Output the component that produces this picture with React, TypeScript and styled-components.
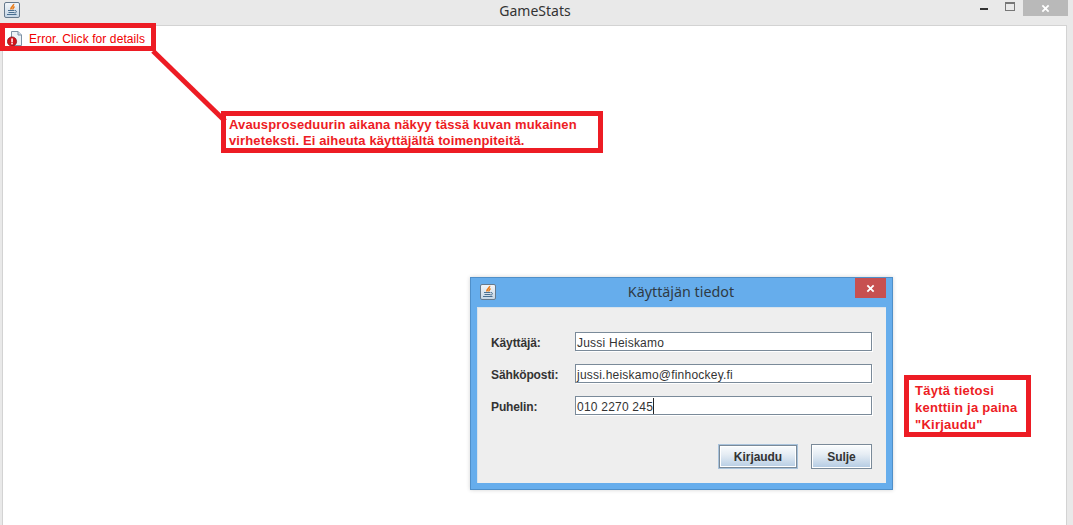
import React from "react";
import styled, { createGlobalStyle } from "styled-components";

const Global = createGlobalStyle`
  html, body { margin: 0; padding: 0; height: 100%; background: #e9e9e9; overflow: hidden; }
  #root { height: 100%; }
`;

const Frame = styled.div`
  width: 1073px;
  height: 525px;
  display: flex;
  flex-direction: column;
  background: #e9e9e9;
  font-family: "Liberation Sans", Arial, sans-serif;
  overflow: hidden;
`;

const TitleBar = styled.div`
  height: 25px;
  flex: none;
  display: flex;
  align-items: flex-start;
  position: relative;
`;

const TitleIcon = styled.span`
  display: flex;
  margin: 2px 0 0 4px;
`;

const TitleText = styled.div`
  position: absolute;
  left: -3px;
  right: 0;
  top: 1px;
  text-align: center;
  font: 14px/19px "Noto Sans", "Open Sans", sans-serif;
  color: #333;
`;

const WinControls = styled.div`
  margin-left: auto;
  margin-right: 5px;
  display: flex;
  align-items: flex-start;
`;

const MinimizeBtn = styled.span`
  width: 8px;
  height: 2px;
  margin-top: 8px;
  margin-right: 17px;
  background: #333;
`;

const MaximizeBtn = styled.span`
  width: 8px;
  height: 6px;
  box-sizing: content-box;
  margin-top: 2px;
  margin-right: 8px;
  border: 1px solid #777;
  border-top-width: 2px;
`;

const CloseBtn = styled.span`
  width: 45px;
  height: 16px;
  background: #b9b9b9;
  color: #fff;
  display: flex;
  align-items: center;
  justify-content: center;
`;

const Client = styled.div`
  flex: 1;
  position: relative;
  margin: 0 6px 0 2px;
  background: #fff;
  border: 1px solid #d3d3d3;
  border-bottom: 0;
`;

const ErrorRow = styled.div`
  position: absolute;
  left: 4px;
  top: 3px;
  display: flex;
  align-items: center;
  gap: 6px;
  height: 20px;
  color: #f00000;
  font-size: 12px;
  letter-spacing: 0.09px;
`;

const Callout = styled.div<{ $x: number; $y: number; $w: number; $h: number; $lh: number }>`
  position: absolute;
  left: ${(p) => p.$x}px;
  top: ${(p) => p.$y}px;
  width: ${(p) => p.$w}px;
  height: ${(p) => p.$h}px;
  box-sizing: border-box;
  border: 5px solid #ed1c24;
  color: #ed1c24;
  font-weight: 700;
  font-size: 13px;
  line-height: ${(p) => p.$lh}px;
  white-space: nowrap;
  z-index: 2;
`;

const CalloutText = styled.div<{ $px: number; $py: number; $ls: number }>`
  padding: ${(p) => p.$py}px 0 0 ${(p) => p.$px}px;
  letter-spacing: ${(p) => p.$ls}px;
`;

const Leader = styled.svg`
  position: absolute;
  left: -3px;
  top: -26px;
  width: 300px;
  height: 150px;
  z-index: 2;
  pointer-events: none;
`;

const Dialog = styled.div`
  position: absolute;
  left: 467px;
  top: 251px;
  width: 423px;
  height: 213px;
  box-sizing: border-box;
  background: #66adec;
  border: 1px solid #4f8fc9;
  box-shadow: 0 0 4px rgba(0, 0, 0, 0.18);
  display: flex;
  flex-direction: column;
  padding: 0 6px 6px;
  color: #333;
`;

const DialogHead = styled.div`
  height: 29px;
  flex: none;
  position: relative;
  display: flex;
  align-items: flex-start;
`;

const DialogIcon = styled.span`
  display: flex;
  margin: 6px 0 0 3px;
`;

const DialogTitle = styled.div`
  position: absolute;
  left: -1px;
  right: 0;
  top: 4px;
  text-align: center;
  font: 14.3px/20px "Noto Sans", "Open Sans", sans-serif;
  color: #2f3a44;
`;

const DialogClose = styled.span`
  margin-left: auto;
  width: 31px;
  height: 20px;
  background: #c75050;
  color: #fff;
  display: flex;
  align-items: center;
  justify-content: center;
  position: relative;
`;

const DialogBody = styled.div`
  flex: 1;
  background: #eeeeee;
  border: 1px solid #d8e3ec;
  border-width: 1px 0 0 1px;
  padding: 24px 14px 13px 12px;
  display: flex;
  flex-direction: column;
`;

const FormGrid = styled.div`
  display: grid;
  grid-template-columns: 85px 297px;
  grid-auto-rows: 19px;
  row-gap: 13px;
  align-items: center;
`;

const FieldLabel = styled.label`
  font-weight: 700;
  font-size: 12px;
  color: #333;
  padding: 2px 0 0 1px;
  letter-spacing: -0.12px;
`;

const Field = styled.div`
  height: 19px;
  box-sizing: border-box;
  background: #fff;
  border: 1px solid #7a8a99;
  box-shadow: 1px 1px 0 #fff;
  padding-left: 1px;
  font-size: 12px;
  line-height: 20px;
  color: #333;
  letter-spacing: 0.22px;
  white-space: nowrap;
  display: flex;
`;

const Caret = styled.span`
  width: 1px;
  height: 16px;
  margin-top: 1px;
  background: #222;
`;

const Actions = styled.div`
  margin-top: 29px;
  display: flex;
  justify-content: flex-end;
  gap: 13px;
`;

const Btn = styled.button<{ $w: number; $focus?: boolean }>`
  width: ${(p) => p.$w}px;
  height: 25px;
  box-sizing: border-box;
  padding: 0;
  font-family: inherit;
  font-size: 12px;
  font-weight: 700;
  color: #333;
  letter-spacing: -0.05px;
  border: 1px solid ${(p) => (p.$focus ? "#a9c3dc" : "#7a8a99")};
  background: linear-gradient(#fbfdfe 0%, #e6edf4 40%, #b3cbe3 100%);
  box-shadow: ${(p) => (p.$focus ? "inset 0 0 0 1px #7a8a99, inset 0 0 0 2px #fff" : "inset 0 0 0 1px #fff")};
`;

const JavaIcon = () => (
  <svg width="16" height="16" viewBox="0 0 16 16">
    <defs>
      <linearGradient id="jv" x1="0" y1="0" x2="0" y2="1">
        <stop offset="0" stopColor="#f3f6f9" />
        <stop offset="1" stopColor="#c4d5e5" />
      </linearGradient>
    </defs>
    <rect x="0.5" y="0.5" width="15" height="15" rx="1.5" fill="url(#jv)" stroke="#66798c" />
    <path d="M9.5 2C10.5 3.5 6.5 4.5 7 7.5M10.5 4.5C9.5 5.5 8.5 6 9 7.5" fill="none" stroke="#ea7a16" strokeWidth="1.6" />
    <path d="M4 8.5h6.5M4.5 10.5h6M3 12.5h9.5M11 8.5c2 0 2 2.5-.5 2.5" fill="none" stroke="#4a6f90" strokeWidth="1" />
  </svg>
);

const ErrorDocIcon = () => (
  <svg width="16" height="16" viewBox="0 0 16 16">
    <path d="M4.5 0.5H11L14.5 4V14.5H4.5Z" fill="#eef2f6" stroke="#7d91a5" />
    <path d="M11 0.5V4H14.5" fill="#d5dfe8" stroke="#7d91a5" />
    <circle cx="5" cy="10.5" r="4.6" fill="#d3141c" stroke="#7a1015" strokeWidth="0.7" />
    <rect x="4.3" y="7.4" width="1.5" height="4" fill="#fff" />
    <rect x="4.3" y="12" width="1.5" height="1.4" fill="#fff" />
  </svg>
);

const CloseGlyph = ({ size }: { size: number }) => (
  <svg width={size} height={size} viewBox="0 0 10 10">
    <path d="M1.5 1.5L8.5 8.5M8.5 1.5L1.5 8.5" stroke="#fff" strokeWidth="2" />
  </svg>
);

export default function App() {
  return (
    <Frame>
      <Global />
      <TitleBar>
        <TitleIcon>
          <JavaIcon />
        </TitleIcon>
        <TitleText>GameStats</TitleText>
        <WinControls>
          <MinimizeBtn />
          <MaximizeBtn />
          <CloseBtn>
            <CloseGlyph size={9} />
          </CloseBtn>
        </WinControls>
      </TitleBar>
      <Client>
        <ErrorRow>
          <ErrorDocIcon />
          <span>Error. Click for details</span>
        </ErrorRow>
        <Callout $x={-3} $y={-3} $w={156} $h={28} $lh={18} />
        <Leader viewBox="0 0 300 150">
          <path d="M153 51L225 121" stroke="#ed1c24" strokeWidth="5" fill="none" />
        </Leader>
        <Callout $x={218} $y={85} $w={382} $h={42} $lh={16}>
          <CalloutText $px={3} $py={1} $ls={0.13}>
            Avausproseduurin aikana näkyy tässä kuvan mukainen
            <br />
            virheteksti. Ei aiheuta käyttäjältä toimenpiteitä.
          </CalloutText>
        </Callout>
        <Callout $x={901} $y={349} $w={127} $h={62} $lh={17}>
          <CalloutText $px={6} $py={2} $ls={0.25}>
            Täytä tietosi
            <br />
            kenttiin ja paina
            <br />
            "Kirjaudu"
          </CalloutText>
        </Callout>
        <Dialog>
          <DialogHead>
            <DialogIcon>
              <JavaIcon />
            </DialogIcon>
            <DialogTitle>Käyttäjän tiedot</DialogTitle>
            <DialogClose>
              <CloseGlyph size={9} />
            </DialogClose>
          </DialogHead>
          <DialogBody>
            <FormGrid>
              <FieldLabel>Käyttäjä:</FieldLabel>
              <Field>Jussi Heiskamo</Field>
              <FieldLabel>Sähköposti:</FieldLabel>
              <Field>jussi.heiskamo@finhockey.fi</Field>
              <FieldLabel>Puhelin:</FieldLabel>
              <Field>
                010 2270 245
                <Caret />
              </Field>
            </FormGrid>
            <Actions>
              <Btn $w={80} $focus>
                Kirjaudu
              </Btn>
              <Btn $w={61}>Sulje</Btn>
            </Actions>
          </DialogBody>
        </Dialog>
      </Client>
    </Frame>
  );
}
